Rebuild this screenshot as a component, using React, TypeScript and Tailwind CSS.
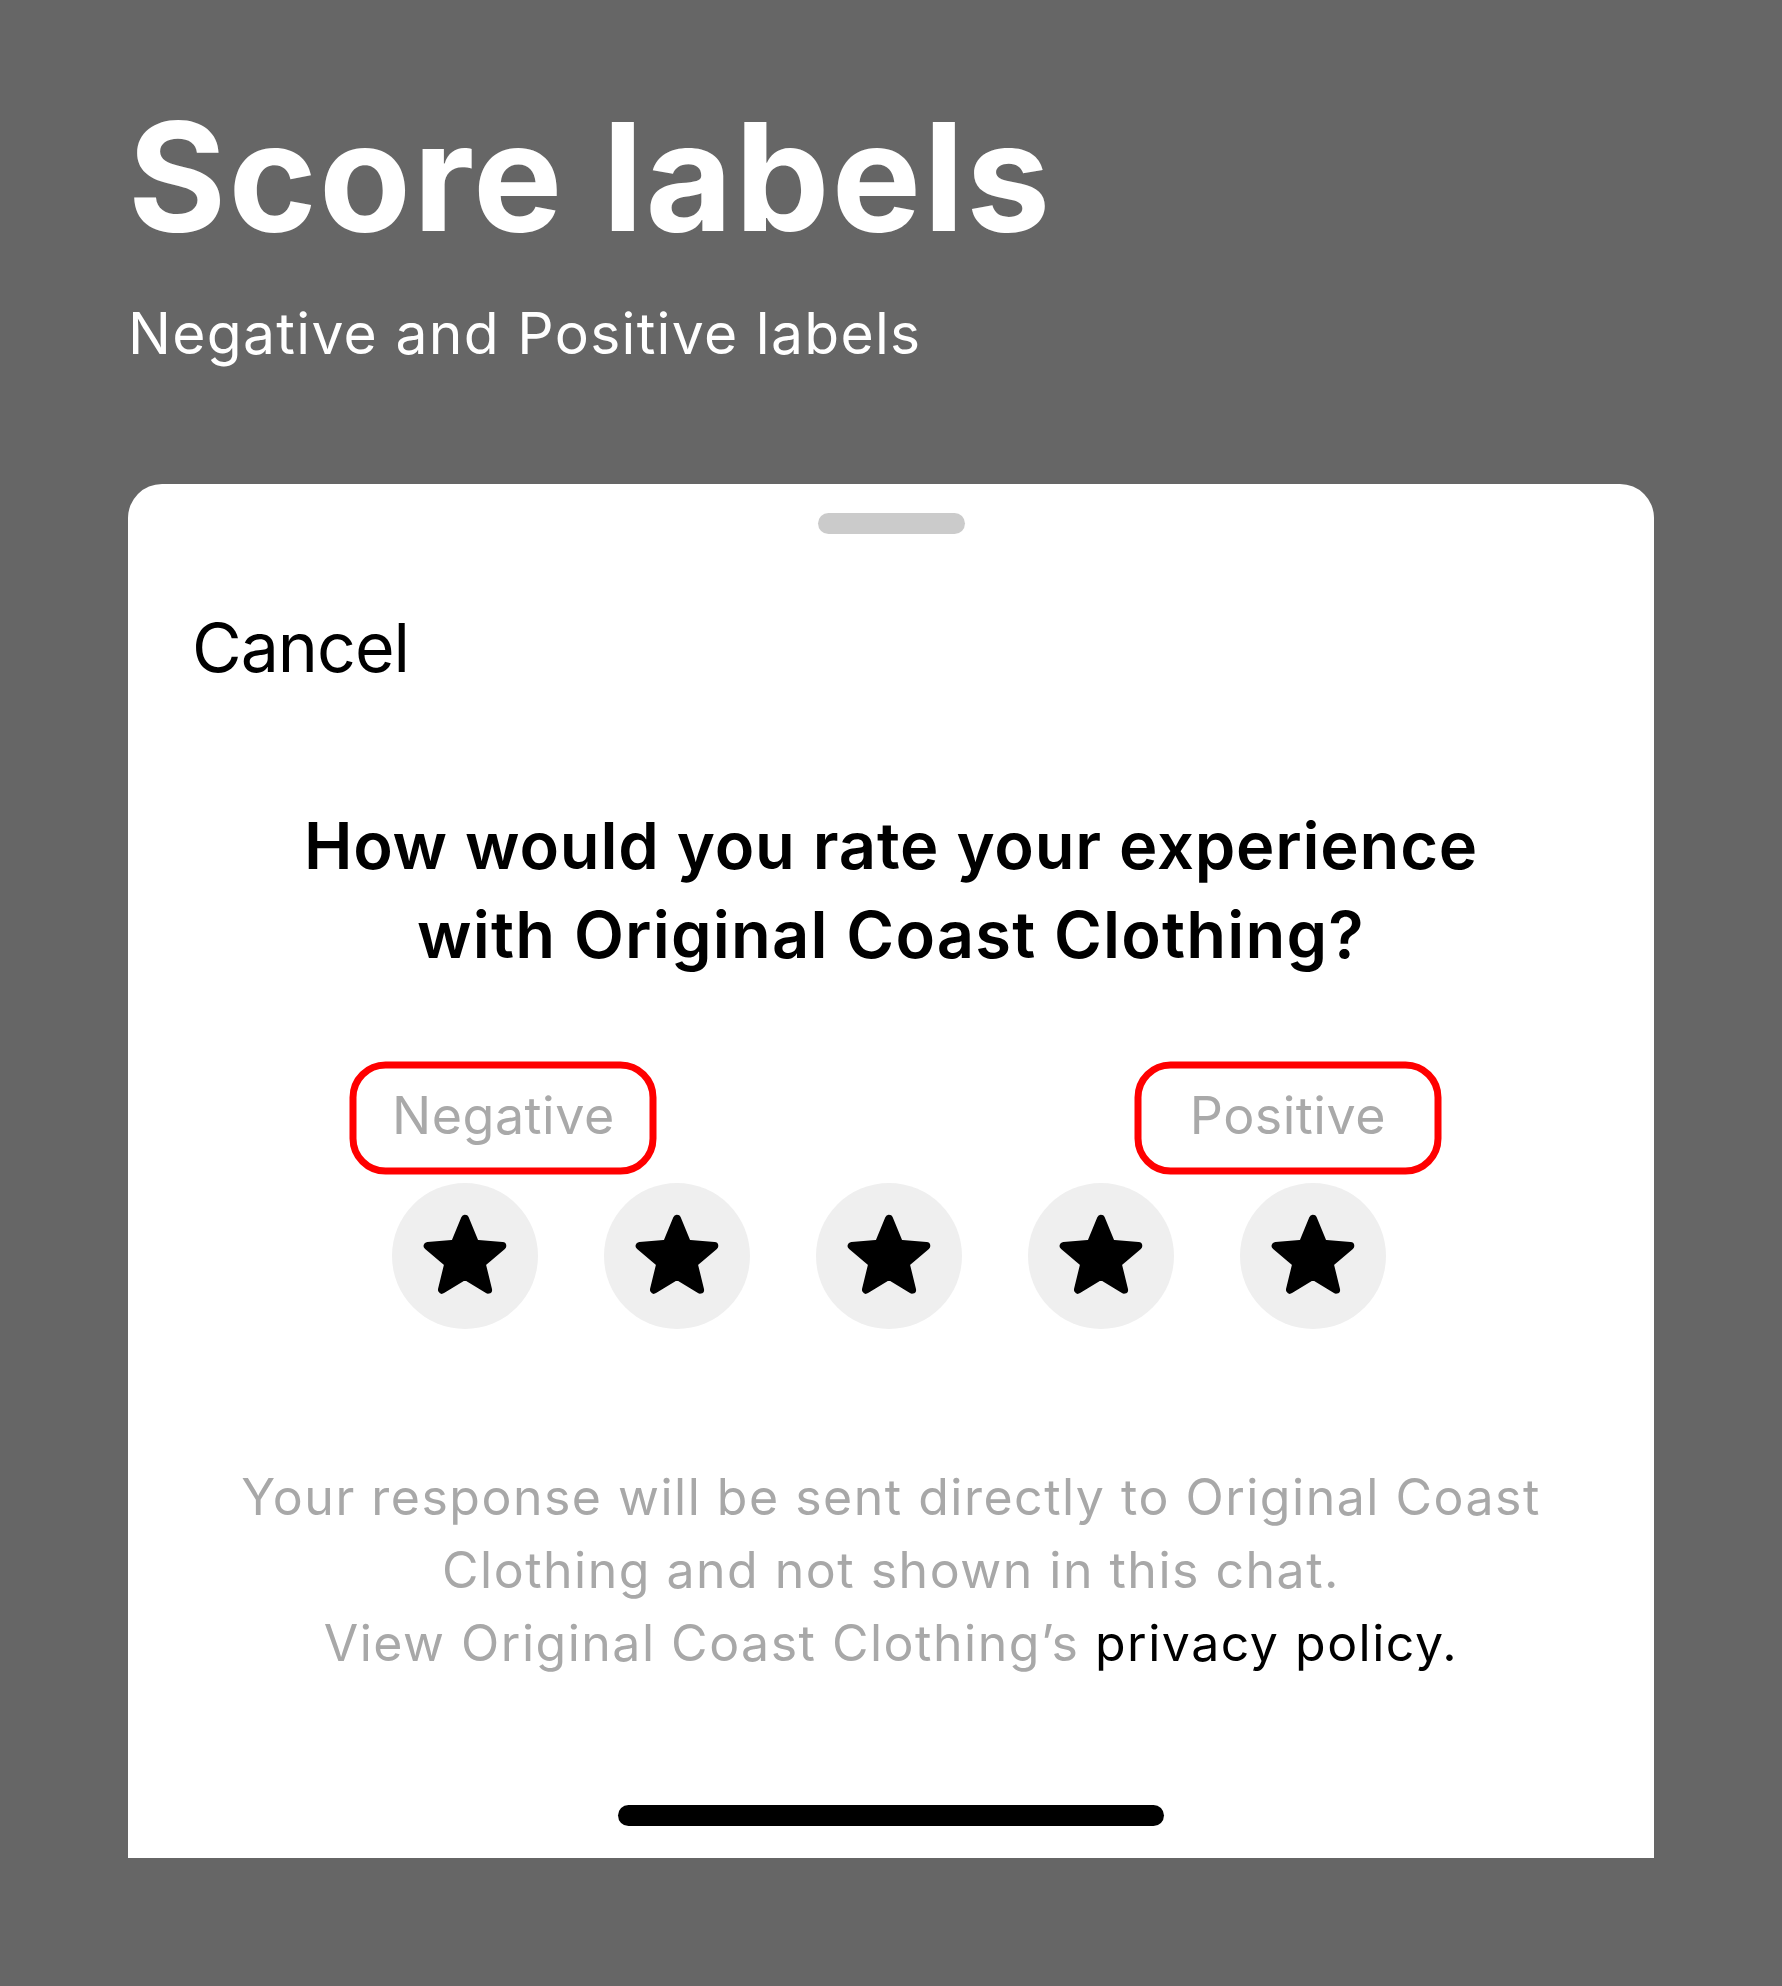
const font = { fontFamily: "Inter, 'Noto Sans', sans-serif" };

const starPoints = (() => {
  const R = 39.2;
  const r = 17.5;
  const pts: string[] = [];
  for (let i = 0; i < 10; i++) {
    const a = ((-90 + i * 36) * Math.PI) / 180;
    const rad = i % 2 === 0 ? R : r;
    pts.push(`${(rad * Math.cos(a)).toFixed(2)},${(rad * Math.sin(a) + 2).toFixed(2)}`);
  }
  return pts.join(" ");
})();

function StarButton() {
  return (
    <button
      type="button"
      className="w-[146px] h-[146px] rounded-full bg-[#efefef] flex items-center justify-center"
    >
      <svg width="100" height="100" viewBox="-50 -50 100 100">
        <polygon
          points={starPoints}
          fill="#000"
          stroke="#000"
          strokeWidth="8"
          strokeLinejoin="round"
        />
      </svg>
    </button>
  );
}

function ScoreLabel({ text }: { text: string }) {
  return (
    <div className="relative">
      <span className="block text-[52px] leading-[52px] tracking-[0.5px] text-[#a9a9a9]">{text}</span>
      {/* annotation box */}
      <div className="absolute left-1/2 top-1/2 -translate-x-1/2 -translate-y-1/2 mt-[2px] w-[307px] h-[113px] border-[7px] border-[#ff0000] rounded-[36px]" />
    </div>
  );
}

export default function App() {
  return (
    <div className="min-h-screen w-full bg-[#666666] px-[128px] pt-[100px]" style={font}>
      {/* Header */}
      <h1 className="text-white font-bold text-[150px] leading-[154px] tracking-[2.3px]">
        Score labels
      </h1>
      <p className="mt-[52px] text-white text-[57px] leading-[56px] tracking-[1.3px]">
        Negative and Positive labels
      </p>

      {/* Sheet */}
      <div className="mt-[122px] bg-white rounded-t-[34px] h-[1374px] flex flex-col">
        <div className="pt-[29px] flex justify-center">
          <div className="w-[147px] h-[21px] rounded-full bg-[#cbcbcb]" />
        </div>

        <div className="mt-[78px] pl-[64px]">
          <button type="button" className="text-black text-[68px] leading-[70px] tracking-[-1px]">
            Cancel
          </button>
        </div>

        <h2 className="mt-[119px] text-center text-black font-semibold text-[65px] leading-[89px]">
          <span className="tracking-[0.8px]">How would you rate your experience</span>
          <br />
          <span className="tracking-[1.2px]">with Original Coast Clothing?</span>
        </h2>

        <div className="mt-[111px] w-[998px] pr-[4px] mx-auto">
          <div className="flex justify-between">
            <ScoreLabel text="Negative" />
            <ScoreLabel text="Positive" />
          </div>
          <div className="mt-[41px] flex justify-between">
            {[1, 2, 3, 4, 5].map((n) => (
              <StarButton key={n} />
            ))}
          </div>
        </div>

        <p className="mt-[132px] text-center text-[#a8a8a8] text-[50px] leading-[73px] tracking-[1.5px]">
          Your response will be sent directly to Original Coast
          <br />
          Clothing and not shown in this chat.
          <br />
          View Original Coast Clothing’s <span className="text-black">privacy policy.</span>
        </p>

        <div className="mt-auto pb-[32px] flex justify-center">
          <div className="w-[546px] h-[21px] rounded-full bg-black" />
        </div>
      </div>
    </div>
  );
}
